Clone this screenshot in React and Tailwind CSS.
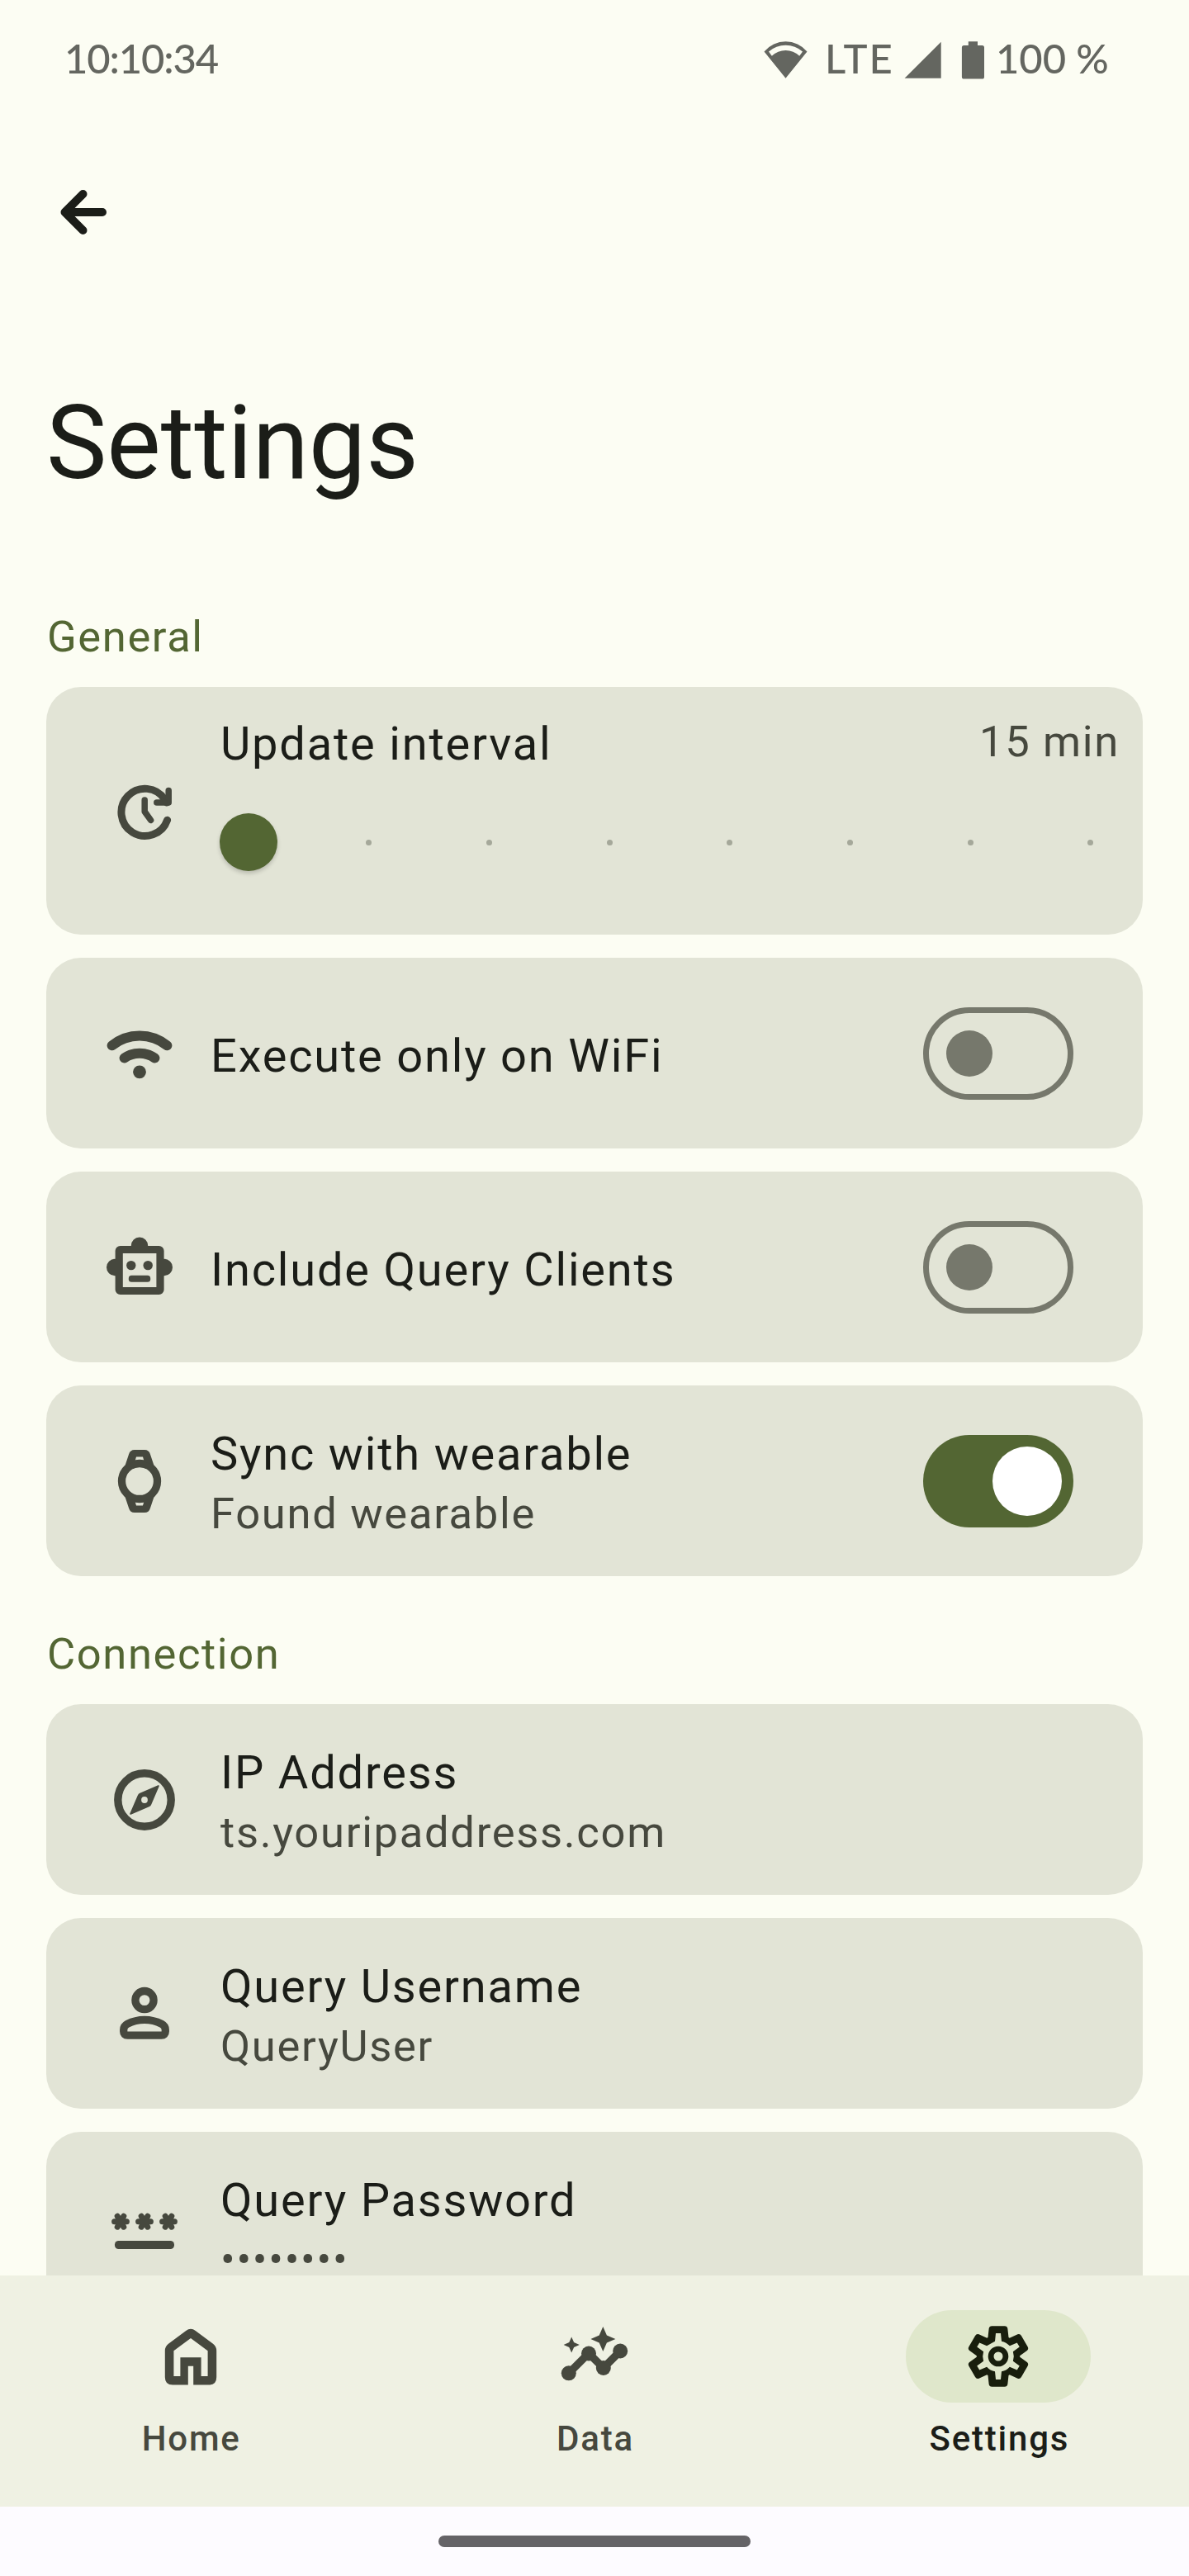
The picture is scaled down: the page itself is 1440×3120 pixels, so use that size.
import React from "react";

/* ---------- icons, all drawn on an 84 unit grid ---------- */

function Icon({ children, className = "" }) {
  return (
    <svg viewBox="0 0 84 84" className={`h-[84px] w-[84px] shrink-0 ${className}`} fill="currentColor" aria-hidden="true">
      {children}
    </svg>
  );
}

const stroke = { fill: "none", stroke: "currentColor", strokeLinecap: "round", strokeLinejoin: "round" };

const BackIcon = () => (
  <Icon>
    <path {...stroke} strokeWidth="10" d="M65 42H20M41.5 20 19.5 42l22 22" />
  </Icon>
);

const UpdateIcon = () => (
  <Icon>
    <path {...stroke} strokeWidth="9" d="M69.6 52.2A28.6 28.6 0 1 1 66.5 27.2L69 31" />
    <path {...stroke} strokeWidth="7.5" d="M71.2 16.6V31H56.8" />
    <path d="M60 22 71 30 66 34Z" />
    <path {...stroke} strokeWidth="7.5" d="M42.2 28V42L49.6 52.4" />
  </Icon>
);

const WifiIcon = () => (
  <Icon>
    <path {...stroke} strokeWidth="12" d="M8.6 32.3A53 53 0 0 1 75.4 32.3M23.6 47.4A33 33 0 0 1 60.4 47.4" />
    <circle cx="42" cy="64.3" r="7.9" />
  </Icon>
);

const RobotIcon = () => (
  <Icon>
    <rect {...stroke} strokeWidth="9.2" x="17.2" y="20.5" width="49.8" height="50" rx="1.5" />
    <path d="M31.8 15.8a10.2 10.2 0 0 1 20.4 0V20H31.8ZM12.2 31.8a10.2 10.2 0 0 0 0 20.4H16V31.800ZM71.8 31.8a10.2 10.2 0 0 1 0 20.4H68V31.800Z" />
    <circle cx="31.8" cy="39.6" r="5.7" />
    <circle cx="52.2" cy="39.6" r="5.7" />
    <rect x="28.8" y="51.8" width="26.4" height="8" rx="3.6" />
  </Icon>
);

const WatchIcon = () => (
  <Icon>
    <circle {...stroke} strokeWidth="9.3" cx="42" cy="42" r="21.5" />
    <path
      fillRule="evenodd"
      d="M24.5 23 29 9.5Q30.5 4 36 4H48Q53.5 4 55 9.5L59.5 23 50 19 42 17 34 19ZM38 12.4 36.6 17.2Q42 15.6 47.4 17.2L46 12.4Z"
    />
    <path
      fillRule="evenodd"
      d="M24.5 61 29 74.5Q30.5 80 36 80H48Q53.5 80 55 74.5L59.5 61 50 65 42 67 34 65ZM38 71.6 36.6 66.8Q42 68.4 47.4 66.8L46 71.6Z"
    />
  </Icon>
);

const CompassIcon = () => (
  <Icon>
    <circle {...stroke} strokeWidth="9.4" cx="42" cy="42" r="32.2" />
    <path
      fillRule="evenodd"
      d="M58.4 24.3Q60.2 23.8 59.7 25.6L50.3 47.4Q49.6 49.4 47.6 50.2L25.6 59.7Q23.8 60.2 24.3 58.4L33.8 36.4Q34.6 34.6 36.4 33.8ZM42 38.1a3.9 3.9 0 1 0 0 7.8 3.9 3.9 0 0 0 0-7.8Z"
    />
  </Icon>
);

const PersonIcon = () => (
  <Icon>
    <circle {...stroke} strokeWidth="9.3" cx="42" cy="25.6" r="11.1" />
    <path
      {...stroke}
      strokeWidth="9.3"
      d="M21.5 68.2H62.5Q67.3 68.2 67.3 63.5V61.5Q67.3 56.8 62.8 54.4 53 49.4 42 49.4T21.2 54.4Q16.7 56.8 16.7 61.5V63.5Q16.7 68.2 21.5 68.2Z"
    />
  </Icon>
);

const PasswordIcon = () => (
  <Icon>
    {[13, 42, 71].map((x) => (
      <path
        key={x}
        {...stroke}
        strokeWidth="7"
        transform={`translate(${x} 34.7)`}
        d="M-7.4 0H7.4M-3.8-6.5 3.8 6.5M3.8-6.5-3.8 6.5"
      />
    ))}
    <rect x="6" y="58" width="72" height="10" rx="4.6" />
  </Icon>
);

const HomeIcon = () => (
  <Icon>
    <path
      fillRule="evenodd"
      d="M10.8 67.3V35.2Q10.8 30 15 26.8L36.2 10.9Q42 6.8 47.8 10.9L69 26.8Q73.2 30 73.2 35.2V67.3Q73.2 76.6 63.9 76.6H45.2V53.7H38.8V76.6H20.1Q10.8 76.6 10.8 67.3ZM21.4 66H29.4V43.3H54.6V66H62.6V35.2L42 20 21.4 35.2Z"
    />
  </Icon>
);

const InsightsIcon = () => (
  <Icon>
    <path {...stroke} strokeWidth="9.4" d="M11 62.3 35 38.3 52.8 56 73.2 35.7" />
    <circle cx="10.8" cy="62.3" r="9" />
    <circle cx="35" cy="38.6" r="9" />
    <circle cx="52.8" cy="56" r="9" />
    <circle cx="73.2" cy="35.5" r="9" />
    <path d="M52.3 6 56.9 16.4 67.4 21 56.9 25.6 52.3 36 47.7 25.6 37.4 21 47.7 16.4Z" />
    <path d="M14.2 18.4 17.1 25.1 23.8 28 17.1 30.9 14.2 37.6 11.3 30.9 4.6 28 11.3 25.1Z" />
  </Icon>
);

/* Six identical teeth, turned in steps of 60 degrees round the centre. */
function gearPath() {
  const at = (x, y, k) => {
    const a = (k * Math.PI) / 3;
    const px = x * Math.cos(a) - y * Math.sin(a);
    const py = x * Math.sin(a) + y * Math.cos(a);
    return `${(42 + px / 3).toFixed(2)} ${(42 + py / 3).toFixed(2)}`;
  };
  let outer = "";
  let inner = "";
  for (let k = 0; k < 6; k++) {
    outer += `${k ? "L" : "M"}${at(-37.5, -69, k)}L${at(-34, -101, k)}Q${at(-32.5, -110, k)} ${at(-23, -110, k)}`;
    outer += `L${at(23, -110, k)}Q${at(32.5, -110, k)} ${at(34, -101, k)}L${at(37.5, -69, k)}`;
    inner += `${k ? "A18.6 18.6 0 0 1 " : "M"}${at(-12, -55, k)}L${at(-9, -84, k)}L${at(9, -84, k)}L${at(12, -55, k)}`;
  }
  return `${outer}Z${inner}Z`;
}

const GearIcon = () => (
  <Icon>
    <path fillRule="evenodd" d={gearPath()} />
    <circle {...stroke} strokeWidth="6.8" cx="42" cy="42" r="8.9" />
  </Icon>
);

/* ---------- building blocks ---------- */

function StatusBar() {
  return (
    <header className="flex h-[140px] items-start pl-[78px] font-['Lato',sans-serif] text-[49px] leading-[141px] font-medium text-[#646660]">
      <span className="w-[847px] tracking-[-1.15px]">10:10:34</span>
      <svg viewBox="0 0 53 45" className="mt-[50px] h-[45px] w-[53px]" fill="currentColor" aria-hidden="true">
        <path
          fillRule="evenodd"
          d="M.5 12.4A34 34 0 0 1 52.5 12.4L26.5 44.7ZM6 12.5 9.8 17.8A24 24 0 0 1 43.2 17.8L47 12.5A30.8 30.8 0 0 0 6 12.5Z"
        />
      </svg>
      <span className="ml-[21px] w-[96px] tracking-[1.9px]">LTE</span>
      <svg viewBox="0 0 45 45" className="mt-[50px] h-[45px] w-[45px]" fill="currentColor" aria-hidden="true">
        <path d="M44.7.7V44.7H.6Z" />
      </svg>
      <svg viewBox="0 0 29 46" className="mt-[50px] ml-6 h-[46px] w-[29px]" fill="currentColor" aria-hidden="true">
        <path d="M8.8.3H20V5H25.5Q28 5 28 7.5V43Q28 45.6 25.5 45.6H3.4Q.9 45.6.9 43V7.5Q.9 5 3.4 5H8.8Z" />
      </svg>
      <span className="ml-[13px] whitespace-nowrap tracking-[-0.1px]">100 %</span>
    </header>
  );
}

function SectionTitle({ children }) {
  return (
    <h2 className="ml-[57px] h-[65px] text-[52.5px] leading-[65px] tracking-[1.6px] text-[#536633]">{children}</h2>
  );
}

function Card({ children, tall = false }) {
  return (
    <article className={`mx-14 flex items-start rounded-[42px] bg-[#e2e4d6] text-[#46483e] ${tall ? "h-[300px]" : "h-[231px]"}`}>
      {children}
    </article>
  );
}

const Title = ({ children }) => (
  <h3 className="text-[56px] leading-[80px] tracking-[1.8px] whitespace-nowrap text-[#1b1d18]">{children}</h3>
);

const Detail = ({ children }) => (
  <p className="text-[52.5px] leading-[65px] tracking-[1.7px] whitespace-nowrap">{children}</p>
);

function Switch({ on }) {
  return on ? (
    <div className="mt-[60px] mr-[84px] ml-auto flex h-[112px] w-[182px] items-center justify-end rounded-full bg-[#536633] pr-[14px]">
      <span className="h-[84px] w-[84px] rounded-full bg-white" />
    </div>
  ) : (
    <div className="mt-[60px] mr-[84px] ml-auto flex h-[112px] w-[182px] items-center rounded-full border-[7px] border-[#76786c] pl-[21px]">
      <span className="h-[56px] w-[56px] rounded-full bg-[#76786c]" />
    </div>
  );
}

function SwitchRow({ icon, title, detail, on }) {
  return (
    <Card>
      <div className="mt-[74px] ml-[71px]">{icon}</div>
      <div className={`ml-[44px] ${detail ? "mt-[43px]" : "mt-[79px]"}`}>
        <Title>{title}</Title>
        {detail && <Detail>{detail}</Detail>}
      </div>
      <Switch on={on} />
    </Card>
  );
}

function TextRow({ icon, title, detail }) {
  return (
    <Card>
      <div className="mt-[74px] ml-[77px]">{icon}</div>
      <div className="mt-[43px] ml-[50px]">
        <Title>{title}</Title>
        <Detail>{detail}</Detail>
      </div>
    </Card>
  );
}

function IntervalRow() {
  return (
    <Card tall>
      <div className="mt-[109px] ml-[77px]">
        <UpdateIcon />
      </div>
      <div className="mt-[29px] mr-7 ml-[49px] flex-1">
        <div className="flex items-start justify-between pl-px">
          <Title>Update interval</Title>
          <div className="mt-[5px]">
            <Detail>15 min</Detail>
          </div>
        </div>
        <div className="mt-[44px] flex justify-between">
          <span className="h-[70px] w-[70px] rounded-full bg-[#536633] shadow-[0_3px_5px_rgba(0,0,0,0.18)]" />
          {Array.from({ length: 7 }, (_, i) => (
            <span key={i} className="flex h-[70px] w-[70px] items-center justify-center">
              <i className="h-[7px] w-[7px] rounded-full bg-[#a5a89a]" />
            </span>
          ))}
        </div>
      </div>
    </Card>
  );
}

function NavItem({ icon, label, active }) {
  return (
    <div className={`flex flex-1 flex-col items-center ${active ? "text-[#1b1d18]" : "text-[#46483e]"}`}>
      <div
        className={`flex h-[112px] w-[224px] items-center justify-center rounded-full ${active ? "bg-[#dfe7cb] text-[#181e0d]" : ""}`}
      >
        {icon}
      </div>
      <span className="mt-[16px] pl-[2px] text-[42px] leading-[56px] font-medium tracking-[1.8px]">{label}</span>
    </div>
  );
}

export default function App() {
  return (
    <div className="flex h-[3120px] w-[1440px] flex-col overflow-hidden bg-[#fcfdf3] font-['Roboto',sans-serif]">
      <div className="h-[2756px] shrink-0 overflow-hidden">
        <StatusBar />
        <div className="mt-[75px] ml-[59px] h-[84px] text-[#1b1d18]">
          <BackIcon />
        </div>
        <h1 className="mt-[163px] ml-14 h-[150px] text-[123.5px] leading-[150px] text-[#1b1d18]">Settings</h1>

        <section className="mt-[127px] flex flex-col gap-7">
          <SectionTitle>General</SectionTitle>
          <IntervalRow />
          <SwitchRow icon={<WifiIcon />} title="Execute only on WiFi" />
          <SwitchRow icon={<RobotIcon />} title="Include Query Clients" />
          <SwitchRow icon={<WatchIcon />} title="Sync with wearable" detail="Found wearable" on />
        </section>

        <section className="mt-[62px] flex flex-col gap-7">
          <SectionTitle>Connection</SectionTitle>
          <TextRow icon={<CompassIcon />} title="IP Address" detail="ts.youripaddress.com" />
          <TextRow icon={<PersonIcon />} title="Query Username" detail="QueryUser" />
          <TextRow icon={<PasswordIcon />} title="Query Password" detail="••••••••" />
        </section>
      </div>

      <nav className="flex h-[280px] shrink-0 gap-7 bg-[#eff1e3] pt-[42px]">
        <NavItem icon={<HomeIcon />} label="Home" />
        <NavItem icon={<InsightsIcon />} label="Data" />
        <NavItem icon={<GearIcon />} label="Settings" active />
      </nav>

      <footer className="flex h-[84px] shrink-0 justify-center bg-[#fdfbff] pt-[35px]">
        <div className="h-[14px] w-[378px] rounded-full bg-[#656367]" />
      </footer>
    </div>
  );
}
